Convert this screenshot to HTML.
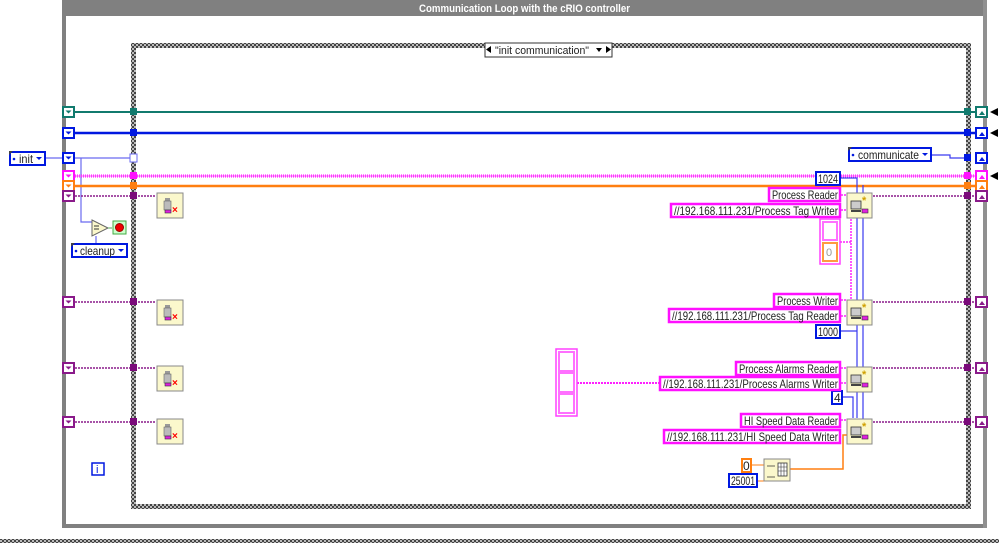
<!DOCTYPE html>
<html><head><style>
html,body{margin:0;padding:0;background:#fff;width:999px;height:543px;overflow:hidden}
svg text{font-family:"Liberation Sans",sans-serif;font-size:12px;fill:#222}
</style></head><body>
<svg width="999" height="543" viewBox="0 0 999 543" xmlns="http://www.w3.org/2000/svg">
<defs>
<pattern id="dots" width="4" height="4" patternUnits="userSpaceOnUse">
<rect width="4" height="4" fill="#444"/><rect width="2" height="2" fill="#bbb"/><rect x="2" y="2" width="2" height="2" fill="#bbb"/>
</pattern>
<g id="close"><rect x="0" y="0" width="26" height="25" fill="#fbf8cc" stroke="#888"/><rect x="8" y="5" width="5" height="3" fill="#999"/><rect x="7" y="8" width="7" height="9" fill="#bbb" stroke="#666" stroke-width="0.6"/><rect x="8" y="17" width="6" height="3" fill="#e020e0" stroke="#333" stroke-width="0.6"/><text x="15" y="20" style="fill:#f00;font-size:10px;font-weight:bold">×</text></g>
<g id="node"><rect x="0" y="0" width="25" height="25" fill="#fbf8cc" stroke="#888"/><rect x="4" y="8" width="10" height="8" fill="#ccc" stroke="#333" stroke-width="0.8"/><rect x="4" y="17" width="10" height="2" fill="#444"/><rect x="15" y="16" width="6" height="4" fill="#e020e0" stroke="#333" stroke-width="0.6"/><text x="15" y="11" style="fill:#d0a000;font-size:11px;font-weight:bold">*</text></g>
<g id="tdown"><rect x="0" y="0" width="11" height="10" fill="#fff" stroke-width="2"/><path d="M2.5 3.5h6l-3 3z" stroke="none"/></g>
</defs>
<rect x="62" y="0" width="925" height="16" fill="#808080"/>
<text x="419" y="12" textLength="211" lengthAdjust="spacingAndGlyphs" style="fill:#fff;font-weight:bold;font-size:11px">Communication Loop with the cRIO controller</text>
<rect x="62" y="0" width="4" height="528" fill="#808080"/>
<rect x="62" y="524" width="924" height="4" fill="#808080"/>
<rect x="983" y="0" width="4" height="528" fill="#909090"/>
<rect x="0" y="539" width="999" height="4" fill="url(#dots)"/>
<rect x="131" y="43" width="840" height="5" fill="url(#dots)"/>
<rect x="131" y="43" width="5" height="466" fill="url(#dots)"/>
<rect x="131" y="504" width="840" height="5" fill="url(#dots)"/>
<rect x="966" y="43" width="5" height="466" fill="url(#dots)"/>
<rect x="485" y="43" width="127" height="14" fill="#fff" stroke="#333"/>
<path d="M491 46v7l-5-3.5z M606 46v7l5-3.5z" fill="#000"/>
<text x="495" y="54" textLength="94" lengthAdjust="spacingAndGlyphs" style="font-size:11px">"init communication"</text>
<path d="M596 48h6l-3 4z" fill="#000"/>
<g fill="none">
<path d="M75 112H978" stroke="#117a6e" stroke-width="2"/>
<path d="M75 133H978" stroke="#0018e0" stroke-width="2.5"/>
<path d="M46 158H63 M75 158H133" stroke="#6a6af0" stroke-width="1.2"/>
<path d="M81 158V222H92 M83 257V247H96V236" stroke="#6a6af0" stroke-width="1.2"/>
<path d="M75 176H978" stroke="#ff10ff" stroke-width="3" stroke-dasharray="1 1"/>
<path d="M75 176H978" stroke="#ff60ff" stroke-width="1"/>
<path d="M75 186H978" stroke="#ff7f10" stroke-width="2.5"/>
<path d="M75 196H156 M873 196H978" stroke="#8a1a8a" stroke-width="1.5" stroke-dasharray="2 1"/>
<path d="M75 302H156 M873 302H978 M75 368H156 M873 368H978 M75 422H156 M873 422H978" stroke="#8a1a8a" stroke-width="1.5" stroke-dasharray="2 1"/>
<path d="M931 155H950V158H968" stroke="#3a3af0" stroke-width="1.2"/>
<path d="M840 178H857V418 M863 185V420 M840 331H857" stroke="#3a3af0" stroke-width="1.2"/>
<path d="M842 397H853V418" stroke="#3a3af0" stroke-width="1.2"/>
<path d="M841 195H847 M841 210H847 M841 300H847 M841 316H847 M841 368H847 M841 383H847 M841 420H847" stroke="#ff20ff" stroke-width="1.5" stroke-dasharray="2 1"/>
<path d="M851 219V300 M840 242H851" stroke="#ff20ff" stroke-width="1.5" stroke-dasharray="2 1"/>
<path d="M577 383H659" stroke="#ff20ff" stroke-width="2" stroke-dasharray="2 1"/>
<path d="M790 469H843V435H847" stroke="#ff7f10" stroke-width="1.5"/>
<path d="M751 465H764 M757 481H768V476" stroke="#ff7f10" stroke-width="1"/>
</g>
<use href="#tdown" x="63" y="107" stroke="#117a6e" fill="#117a6e"/>
<use href="#tdown" x="63" y="128" stroke="#0018e0" fill="#0018e0"/>
<use href="#tdown" x="63" y="153" stroke="#0018e0" fill="#0018e0"/>
<use href="#tdown" x="63" y="171" stroke="#ff10ff" fill="#ff10ff"/>
<use href="#tdown" x="63" y="181" stroke="#ff7f10" fill="#ff7f10"/>
<use href="#tdown" x="63" y="191" stroke="#8a1a8a" fill="#8a1a8a"/>
<use href="#tdown" x="63" y="297" stroke="#8a1a8a" fill="#8a1a8a"/>
<use href="#tdown" x="63" y="363" stroke="#8a1a8a" fill="#8a1a8a"/>
<use href="#tdown" x="63" y="417" stroke="#8a1a8a" fill="#8a1a8a"/>
<g stroke-width="2" fill="#fff">
<rect x="976" y="107" width="11" height="10" stroke="#117a6e"/><rect x="976" y="128" width="11" height="10" stroke="#0018e0"/>
<rect x="976" y="153" width="11" height="10" stroke="#0018e0"/><rect x="976" y="171" width="11" height="10" stroke="#ff10ff"/>
<rect x="976" y="181" width="11" height="10" stroke="#ff7f10"/><rect x="976" y="191" width="11" height="10" stroke="#8a1a8a"/>
<rect x="976" y="297" width="11" height="10" stroke="#8a1a8a"/><rect x="976" y="363" width="11" height="10" stroke="#8a1a8a"/>
<rect x="976" y="417" width="11" height="10" stroke="#8a1a8a"/>
</g>
<g>
<path d="M979 115h6l-3-4z" fill="#117a6e"/><path d="M979 136h6l-3-4z" fill="#0018e0"/><path d="M979 161h6l-3-4z" fill="#0018e0"/>
<path d="M979 179h6l-3-4z" fill="#ff10ff"/><path d="M979 189h6l-3-4z" fill="#ff7f10"/><path d="M979 199h6l-3-4z" fill="#8a1a8a"/>
<path d="M979 305h6l-3-4z" fill="#8a1a8a"/><path d="M979 371h6l-3-4z" fill="#8a1a8a"/><path d="M979 425h6l-3-4z" fill="#8a1a8a"/>
<path d="M990 112l8-4v8z M990 133l8-4v8z M990 176l8-4v8z" fill="#000"/>
</g>
<rect x="130" y="108" width="7" height="7" fill="#117a6e"/><rect x="130" y="129" width="7" height="7" fill="#0018e0"/>
<rect x="130" y="154" width="7" height="8" fill="#fff" stroke="#6a6af0"/>
<rect x="130" y="172" width="7" height="7" fill="#ff10ff"/><rect x="130" y="182" width="7" height="7" fill="#ff7f10"/>
<rect x="130" y="192" width="7" height="7" fill="#7a0a7a"/><rect x="130" y="298" width="7" height="7" fill="#7a0a7a"/>
<rect x="130" y="364" width="7" height="7" fill="#7a0a7a"/><rect x="130" y="418" width="7" height="7" fill="#7a0a7a"/>
<g><rect x="964" y="108" width="7" height="7" fill="#117a6e"/><rect x="964" y="129" width="7" height="7" fill="#0018e0"/><rect x="964" y="154" width="7" height="7" fill="#0018e0"/>
<rect x="964" y="172" width="7" height="7" fill="#ff10ff"/><rect x="964" y="182" width="7" height="7" fill="#ff7f10"/><rect x="964" y="192" width="7" height="7" fill="#7a0a7a"/>
<rect x="964" y="298" width="7" height="7" fill="#7a0a7a"/><rect x="964" y="364" width="7" height="7" fill="#7a0a7a"/><rect x="964" y="418" width="7" height="7" fill="#7a0a7a"/></g>
<rect x="10" y="152" width="35" height="13" fill="#fff" stroke="#0018e0" stroke-width="2"/>
<text x="19" y="163" textLength="14" lengthAdjust="spacingAndGlyphs">init</text><path d="M36 157h6l-3 3z" fill="#0018e0"/><circle cx="14" cy="159" r="1.3" fill="#0018e0"/><path d="M9 151h4l-4 4z" fill="#444"/>
<rect x="72" y="244" width="55" height="13" fill="#fff" stroke="#0018e0" stroke-width="2"/>
<text x="80" y="255" textLength="35" lengthAdjust="spacingAndGlyphs">cleanup</text><path d="M118 249h6l-3 3z" fill="#0018e0"/><circle cx="76" cy="251" r="1.3" fill="#0018e0"/><path d="M71 243h4l-4 4z" fill="#444"/>
<path d="M92 220L108 228L92 236z" fill="#fbf8cc" stroke="#666"/><path d="M94 226h5M94 229h5" stroke="#333"/>
<path d="M108 228H112" stroke="#5a5" />
<rect x="113" y="221" width="13" height="13" fill="#cfc" stroke="#4a4"/><circle cx="119.5" cy="227.5" r="4" fill="#e00" stroke="#900"/>
<use href="#close" x="157" y="193"/><use href="#close" x="157" y="300"/><use href="#close" x="157" y="366"/><use href="#close" x="157" y="419"/>
<rect x="92" y="463" width="12" height="12" fill="#fff" stroke="#0018e0" stroke-width="1.5"/><text x="96" y="473" style="fill:#0018e0;font-size:11px">i</text>
<rect x="849" y="148" width="82" height="13" fill="#fff" stroke="#0018e0" stroke-width="2"/>
<text x="858" y="159" textLength="61" lengthAdjust="spacingAndGlyphs">communicate</text><path d="M922 153h6l-3 3z" fill="#0018e0"/><circle cx="853" cy="155" r="1.3" fill="#0018e0"/><path d="M848 147h4l-4 4z" fill="#444"/>
<g stroke="#0018e0" stroke-width="2" fill="#fff">
<rect x="816" y="172" width="24" height="13"/><rect x="816" y="325" width="24" height="13"/><rect x="832" y="391" width="10" height="13"/><rect x="729" y="474" width="28" height="13"/>
</g>
<text x="818" y="183" textLength="20" lengthAdjust="spacingAndGlyphs">1024</text><text x="818" y="336" textLength="20" lengthAdjust="spacingAndGlyphs">1000</text><text x="834" y="402">4</text><text x="731" y="485" textLength="24" lengthAdjust="spacingAndGlyphs">25001</text>
<rect x="742" y="459" width="9" height="13" fill="#fff" stroke="#ff7f10" stroke-width="2"/><text x="743" y="470">0</text>
<rect x="764" y="459" width="26" height="22" fill="#fbf8cc" stroke="#888"/>
<path d="M767 466h5M772 466l3 0M767 477h8" stroke="#333" stroke-width="0.8"/>
<rect x="778" y="463" width="9" height="13" fill="#fff" stroke="#333" stroke-width="0.8"/><path d="M781 463v13M784 463v13M778 467h9M778 471h9" stroke="#333" stroke-width="0.6"/>
<g stroke="#ff10ff" stroke-width="2.5" fill="#fff">
<rect x="769" y="188" width="71" height="13"/><rect x="671" y="204" width="169" height="13"/>
<rect x="774" y="294" width="66" height="13"/><rect x="669" y="309" width="171" height="13"/>
<rect x="736" y="362" width="104" height="13"/><rect x="660" y="377" width="180" height="13"/>
<rect x="741" y="414" width="99" height="13"/><rect x="664" y="430" width="176" height="13"/>
</g>
<text x="772" y="199" textLength="66" lengthAdjust="spacingAndGlyphs">Process Reader</text>
<text x="674" y="215" textLength="164" lengthAdjust="spacingAndGlyphs">//192.168.111.231/Process Tag Writer</text>
<text x="777" y="305" textLength="61" lengthAdjust="spacingAndGlyphs">Process Writer</text>
<text x="672" y="320" textLength="166" lengthAdjust="spacingAndGlyphs">//192.168.111.231/Process Tag Reader</text>
<text x="739" y="373" textLength="99" lengthAdjust="spacingAndGlyphs">Process Alarms Reader</text>
<text x="663" y="388" textLength="175" lengthAdjust="spacingAndGlyphs">//192.168.111.231/Process Alarms Writer</text>
<text x="744" y="425" textLength="94" lengthAdjust="spacingAndGlyphs">HI Speed Data Reader</text>
<text x="667" y="441" textLength="171" lengthAdjust="spacingAndGlyphs">//192.168.111.231/HI Speed Data Writer</text>
<rect x="820" y="219" width="20" height="45" fill="#fff" stroke="#ff40ff" stroke-width="1.5"/>
<rect x="823" y="222" width="14" height="18" fill="#fff" stroke="#ff70ff" stroke-width="2"/>
<rect x="823" y="243" width="14" height="18" fill="#fff" stroke="#ff9a40" stroke-width="2"/><text x="826" y="256" style="fill:#999;font-size:11px">0</text>
<rect x="556" y="349" width="21" height="67" fill="#fff" stroke="#ff40ff" stroke-width="1.5"/>
<rect x="559" y="352" width="15" height="19" fill="#fff" stroke="#ff70ff" stroke-width="2"/>
<rect x="559" y="373" width="15" height="19" fill="#fff" stroke="#ff70ff" stroke-width="2"/>
<rect x="559" y="394" width="15" height="19" fill="#fff" stroke="#ff70ff" stroke-width="2"/>
<use href="#node" x="847" y="193"/><use href="#node" x="847" y="300"/><use href="#node" x="847" y="367"/><use href="#node" x="847" y="419"/>
</svg>
</body></html>
